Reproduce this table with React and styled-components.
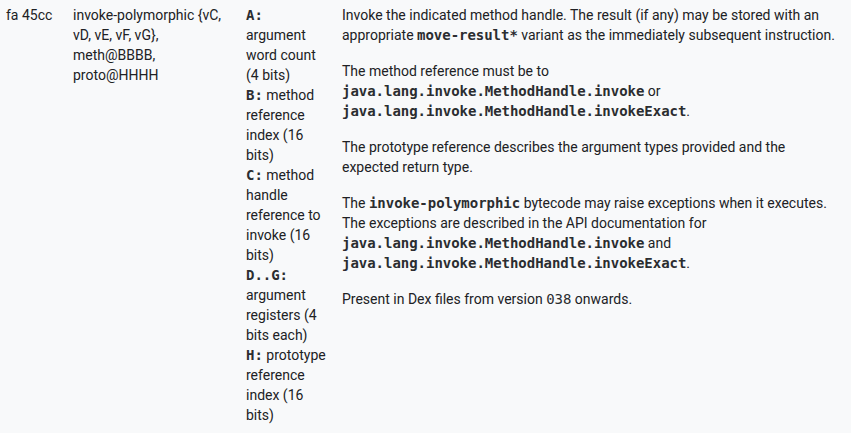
import React from 'react'
import styled, { createGlobalStyle } from 'styled-components'

const Global = createGlobalStyle`
    html, body {
        margin: 0;
        background-color: #f8f9fa;
    }
    body {
        font-family: Roboto, "Noto Sans", sans-serif;
        font-size: 14px;
        line-height: 20px;
        color: #202124;
    }
`;

const Row = styled.div`
    display: grid;
    grid-template-columns: 67px 173px 96px 515px;
    align-items: start;
`;

const Cell = styled.div`
    box-sizing: border-box;
    padding: 5px 10px 0 6px;
`;

const Para = styled.p`
    margin: 0 0 16px 0;
    &:last-child {
        margin-bottom: 0;
    }
`;

const Code = styled.code`
    font-family: "DejaVu Sans Mono", "Liberation Mono", monospace;
    font-size: 14px;
    font-weight: ${props => props.light ? 'normal' : 'bold'};
    color: #2b2d30;
    letter-spacing: -0.03px;
`;

const Arg = styled.div``;

const args = [
    { key: 'A', text: 'argument word count (4 bits)' },
    { key: 'B', text: 'method reference index (16 bits)' },
    { key: 'C', text: 'method handle reference to invoke (16 bits)' },
    { key: 'D..G', text: 'argument registers (4 bits each)' },
    { key: 'H', text: 'prototype reference index (16 bits)' },
];

function App() {
    return (
        <>
        <Global />
        <Row>
            <Cell>fa 45cc</Cell>
            <Cell>invoke-polymorphic {'{'}vC, vD, vE, vF, vG{'}'}, meth@BBBB, proto@HHHH</Cell>
            <Cell>
                {args.map(a => (
                    <Arg key={a.key}>
                        <Code>{a.key}:</Code> {a.text}
                    </Arg>
                ))}
            </Cell>
            <Cell>
                <Para>
                    Invoke the indicated method handle. The result (if any) may be stored with an
                    appropriate <Code>move-result*</Code> variant as the immediately subsequent instruction.
                </Para>
                <Para>
                    The method reference must be to <Code>java.lang.invoke.MethodHandle.invoke</Code> or <Code>java.lang.invoke.MethodHandle.invokeExact</Code>.
                </Para>
                <Para>
                    The prototype reference describes the argument types provided and the expected return type.
                </Para>
                <Para>
                    The <Code>invoke-polymorphic</Code> bytecode may raise exceptions when it executes.
                    The exceptions are described in the API documentation for <Code>java.lang.invoke.MethodHandle.invoke</Code> and <Code>java.lang.invoke.MethodHandle.invokeExact</Code>.
                </Para>
                <Para>
                    Present in Dex files from version <Code light>038</Code> onwards.
                </Para>
            </Cell>
        </Row>
        </>
    )
}

export default App
